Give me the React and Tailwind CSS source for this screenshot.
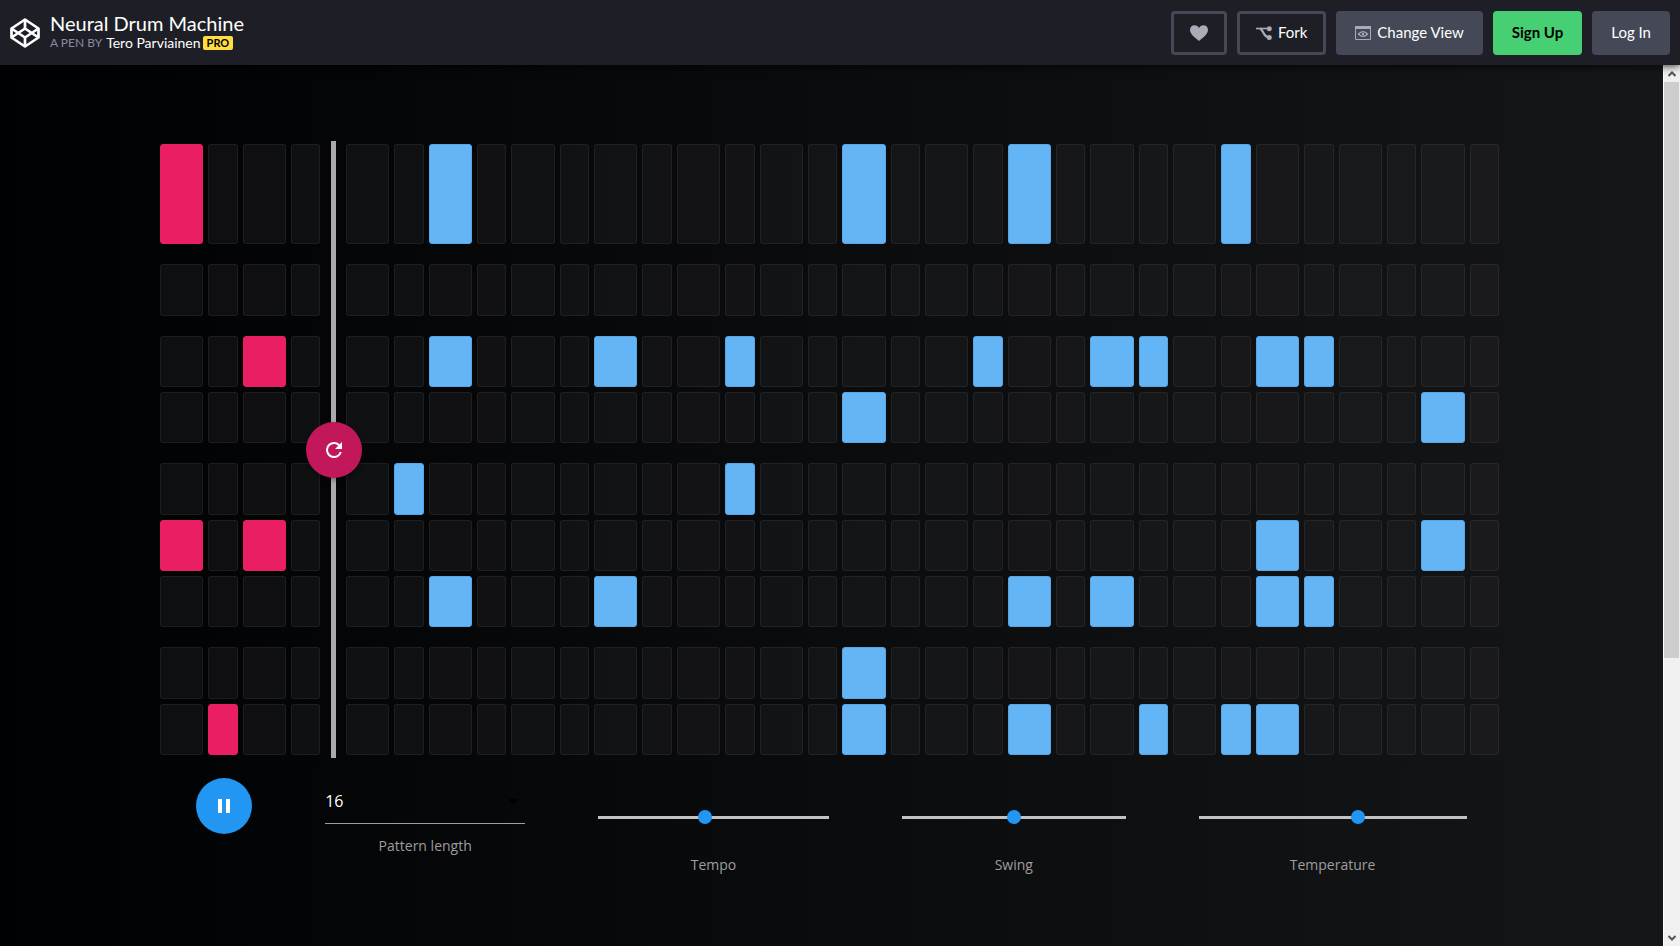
import React, { useState } from "react";

const GROUPS = [
  { height: "h-[100px]", rows: [{ seed: [0], generated: [2, 12, 16, 21] }] },
  { height: "h-[52px]", rows: [{ seed: [], generated: [] }] },
  {
    height: "h-[51px]",
    rows: [
      { seed: [2], generated: [2, 6, 9, 15, 18, 19, 22, 23] },
      { seed: [], generated: [12, 26] },
    ],
  },
  {
    height: "h-[51px] first:h-[52px]",
    rows: [
      { seed: [], generated: [1, 9] },
      { seed: [0, 2], generated: [22, 26] },
      { seed: [], generated: [2, 6, 16, 18, 22, 23] },
    ],
  },
  {
    height: "h-[51px] first:h-[52px]",
    rows: [
      { seed: [], generated: [12] },
      { seed: [1], generated: [12, 16, 19, 21, 22] },
    ],
  },
];

function Cells({ count, active, color, label, height }) {
  return (
    <div className={`flex gap-[5px] ${height}`}>
      {Array.from({ length: count }, (_, i) => (
        <button
          key={i}
          type="button"
          aria-label={`${label}, step ${i + 1}`}
          aria-pressed={active.includes(i)}
          className={`min-w-0 basis-0 rounded-[3px] border ${i % 2 ? "grow-[2]" : "grow-[3]"} ${
            active.includes(i) ? color : "border-white/6 bg-[#2a2a2a]/30"
          }`}
        />
      ))}
    </div>
  );
}

function Panel({ part, count, color, className }) {
  return (
    <div className={`flex min-w-0 basis-0 flex-col gap-5 ${className}`}>
      {GROUPS.map((group, g) => (
        <div key={g} className="flex flex-col gap-[5px]">
          {group.rows.map((row, r) => (
            <Cells
              key={r}
              count={count}
              active={row[part]}
              color={color}
              label={`${part} drum ${g + 1}.${r + 1}`}
              height={group.height}
            />
          ))}
        </div>
      ))}
    </div>
  );
}

function Slider({ id, label, initial, className }) {
  const [value, setValue] = useState(initial);
  return (
    <div className={`flex flex-col items-center pt-8 ${className}`}>
      <input
        id={id}
        type="range"
        min="0"
        max="100"
        value={value}
        onChange={(e) => setValue(e.target.value)}
        className="h-[14px] w-full cursor-pointer appearance-none bg-transparent [&::-webkit-slider-runnable-track]:h-[3px] [&::-webkit-slider-runnable-track]:bg-[#c2c2c2] [&::-webkit-slider-thumb]:mt-[-6px] [&::-webkit-slider-thumb]:size-[14px] [&::-webkit-slider-thumb]:appearance-none [&::-webkit-slider-thumb]:rounded-full [&::-webkit-slider-thumb]:bg-[#2196f3]"
      />
      <label htmlFor={id} className="mt-[31px] text-sm leading-5 text-[#9e9e9e]">
        {label}
      </label>
    </div>
  );
}

function Header() {
  return (
    <header className="relative z-10 flex h-[65px] shrink-0 items-center justify-between bg-[#1e1f26] px-[10px] font-[Lato,sans-serif] text-white shadow-[0_1px_8px_rgba(0,0,0,0.8)]">
      <div className="flex items-center gap-[10px]">
        <a href="#home" aria-label="Home">
          <svg viewBox="0 0 30 30" className="size-[30px]" fill="none" stroke="white" strokeWidth="2.7" strokeLinejoin="round">
            <path d="M15 1.5 28.5 10.5V19.5L15 28.5 1.5 19.5V10.5Z" />
            <path d="M15 1.5V10.5M15 19.5V28.5M1.5 10.5 15 19.5 28.5 10.5M1.5 19.5 15 10.5 28.5 19.5" />
          </svg>
        </a>
        <div className="pb-[2px]">
          <h1 className="text-xl leading-[22px]">Neural Drum Machine</h1>
          <p className="flex items-center text-sm leading-[18px]">
            <span className="mr-1 text-xs text-[#868ca0]">A PEN BY</span>
            <a href="#author">Tero Parviainen</a>
            <span className="ml-[2px] rounded-[2px] bg-[#ffdd40] px-1 text-[11px] leading-[14px] font-bold text-black">PRO</span>
          </p>
        </div>
      </div>
      <nav className="flex gap-[10px] text-[15px]">
        <button type="button" aria-label="Love" className="flex h-11 w-14 items-center justify-center rounded-[4px] border-[3px] border-[#444857]">
          <svg viewBox="0 0 18 16" className="h-4 w-[18px]" fill="#a9abb8">
            <path d="M9 16C7.5 14.4 0 9.6 0 4.9 0 2 2 .3 4.5.3 6.500.3 8 1.200 9 3 10 1.200 11.500.3 13.500.3 16 .3 18 2 18 4.900 18 9.600 10.500 14.400 9 16Z" />
          </svg>
        </button>
        <button type="button" className="flex h-11 items-center gap-[6px] rounded-[4px] border-[3px] border-[#444857] px-4">
          <svg viewBox="0 0 16 14" className="h-[14px] w-4" fill="none" stroke="#a9abb8">
            <path d="M0 2.500H13" strokeWidth="1.600" />
            <path d="M4 2.500C6 3.500 6.500 5 7.500 7S9.500 11 13 11.500" strokeWidth="2.200" />
            <circle cx="13.300" cy="2.700" r="2.500" fill="#a9abb8" stroke="none" />
            <circle cx="13.300" cy="11.500" r="2.500" fill="#a9abb8" stroke="none" />
          </svg>
          Fork
        </button>
        <button type="button" className="flex h-11 items-center gap-[6px] rounded-[4px] bg-[#444857] px-[19px]">
          <svg viewBox="0 0 16 14" className="h-[14px] w-4" fill="none" stroke="#a9abb8">
            <path d="M.5 1V13.500H15.500V1" />
            <path d="M0 1.500H16" strokeWidth="3" />
            <path d="M3.500 8Q8 3.200 12.500 8 8 12.800 3.500 8Z" strokeWidth="1.400" />
            <circle cx="8" cy="8" r="1.200" fill="#a9abb8" stroke="none" />
          </svg>
          Change View
        </button>
        <button type="button" className="h-11 rounded-[4px] bg-[#47cf73] px-[19px] font-bold text-black">Sign Up</button>
        <button type="button" className="h-11 rounded-[4px] bg-[#444857] px-[19px]">Log In</button>
      </nav>
    </header>
  );
}

function Scrollbar() {
  return (
    <div aria-hidden="true" className="flex w-[17px] shrink-0 flex-col border-l border-white bg-[#f0f0f0]">
      <div className="flex h-[17px] items-center justify-center">
        <svg viewBox="0 0 8 6" className="h-[6px] w-2" fill="none" stroke="#555" strokeWidth="2"><path d="M.5 5 4 1.500 7.500 5" /></svg>
      </div>
      <div className="mr-px basis-0 grow-[576] bg-[#cdcdcd]" />
      <div className="basis-0 grow-[271]" />
      <div className="flex h-[17px] items-center justify-center">
        <svg viewBox="0 0 8 6" className="h-[6px] w-2" fill="none" stroke="#555" strokeWidth="2"><path d="M.5 1 4 4.500 7.500 1" /></svg>
      </div>
    </div>
  );
}

export default function App() {
  return (
    <div className="flex min-h-screen flex-col bg-black">
      <Header />
      <div className="flex grow">
        <main className="min-w-0 grow bg-[linear-gradient(to_right,#000103,#151618)] px-40 pt-[79px] font-['Open_Sans','Noto_Sans',sans-serif]">
          <section aria-label="Sequencer" className="flex pr-1">
            <Panel part="seed" count={4} color="border-[#e91e63] bg-[#e91e63]" className="grow-[160]" />
            <div className="relative -my-[3px] mr-[10px] ml-[11px] flex w-[5px] shrink-0 items-center justify-center bg-[#aaa]">
              <button type="button" aria-label="Regenerate" className="flex size-14 shrink-0 items-center justify-center rounded-full bg-[#c2185b] shadow-[0_2px_5px_rgba(0,0,0,0.4)]">
                <svg viewBox="0 0 24 24" className="size-6" fill="white">
                  <path d="M17.650 6.350A7.958 7.958 0 0 0 12 4a8 8 0 1 0 7.730 10h-2.080A5.990 5.990 0 0 1 12 18a6 6 0 1 1 0-12c1.660 0 3.140.69 4.220 1.780L13 11h7V4z" />
                </svg>
              </button>
            </div>
            <Panel part="generated" count={28} color="border-[#5ca5e3] bg-[#64b5f6]" className="grow-[1153]" />
          </section>

          <section aria-label="Controls" className="mt-[23px] flex items-start justify-around">
            <button type="button" aria-label="Pause" className="flex size-14 items-center justify-center rounded-full bg-[#2196f3]">
              <svg viewBox="0 0 24 24" className="size-6" fill="white"><path d="M6 19h4V5H6v14zm8-14v14h4V5h-4z" /></svg>
            </button>
            <div className="flex w-[200px] flex-col items-center">
              <div className="relative w-full">
                <select id="pattern-length" defaultValue="16" className="h-[46px] w-full appearance-none border-b border-[#9e9e9e] bg-transparent text-base text-white">
                  {[2, 4, 8, 16, 32].map((n) => (
                    <option key={n} value={n} className="text-black">{n}</option>
                  ))}
                </select>
                <svg viewBox="0 0 10 5" className="pointer-events-none absolute top-[21px] right-[7px] h-[5px] w-[10px]" fill="black"><path d="M0 0H10L5 5Z" /></svg>
              </div>
              <label htmlFor="pattern-length" className="mt-3 text-sm leading-5 text-[#9e9e9e]">Pattern length</label>
            </div>
            <Slider id="tempo" label="Tempo" initial={46} className="w-[231px]" />
            <Slider id="swing" label="Swing" initial={50} className="w-[224px]" />
            <Slider id="temperature" label="Temperature" initial={60} className="w-[268px]" />
          </section>
        </main>
        <Scrollbar />
      </div>
    </div>
  );
}
